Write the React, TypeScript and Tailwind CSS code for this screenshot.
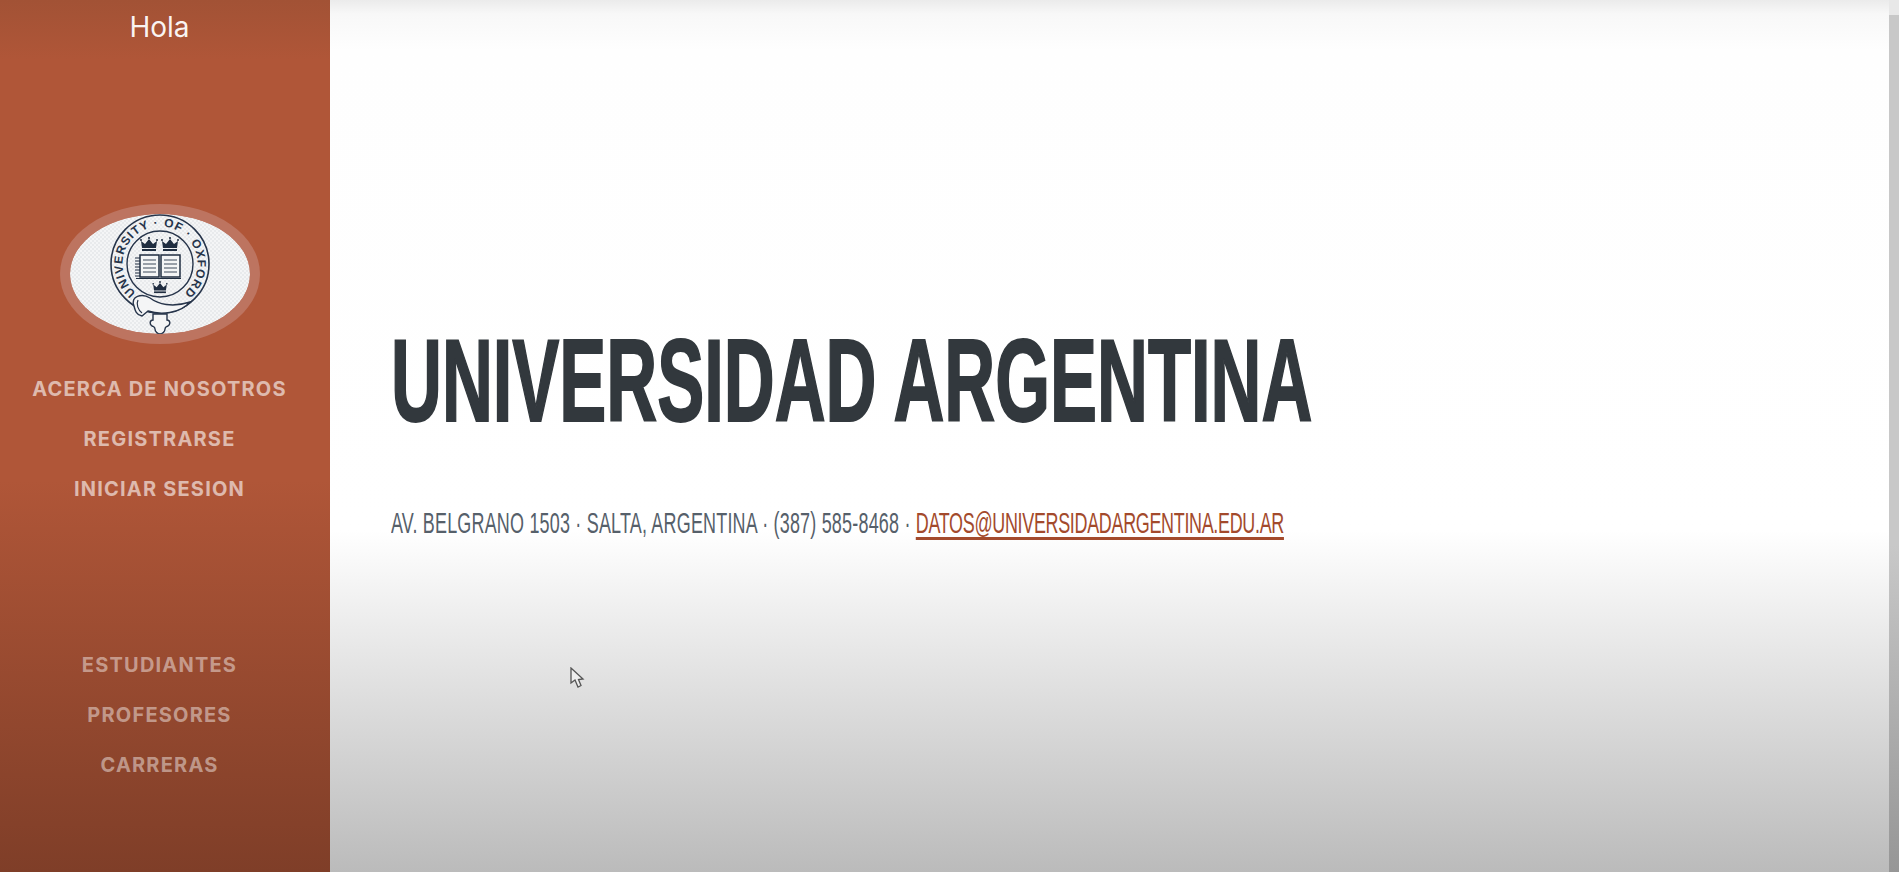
const sealLabel = "UNIVERSITY · OF · OXFORD"

const topLinks = ["ACERCA DE NOSOTROS", "REGISTRARSE", "INICIAR SESION"]
const bottomLinks = ["ESTUDIANTES", "PROFESORES", "CARRERAS"]

function Crown({ x, y, s = 1 }: { x: number; y: number; s?: number }) {
  return (
    <g transform={`translate(${x} ${y}) scale(${s})`} fill="#1f2d40">
      <path d="M-8 -4 L-7 3 L7 3 L8 -4 L4 -1 L0 -6 L-4 -1 Z" />
      <rect x="-7" y="4" width="14" height="2" />
      <circle cx="0" cy="-7" r="1.1" />
      <circle cx="-8" cy="-5" r="1" />
      <circle cx="8" cy="-5" r="1" />
    </g>
  )
}

function Seal() {
  return (
    <svg width="180" height="120" viewBox="0 0 180 120" className="block">
      <defs>
        <pattern id="check" width="4" height="4" patternUnits="userSpaceOnUse">
          <rect width="4" height="4" fill="#f4f5f6" />
          <rect width="2" height="2" fill="#e8eaec" />
          <rect x="2" y="2" width="2" height="2" fill="#e8eaec" />
        </pattern>
        <path id="ring" d="M 65.9 78.7 A 37.5 37.5 0 1 1 114.1 78.7" />
      </defs>
      <ellipse cx="90" cy="60" rx="90" ry="60" fill="url(#check)" />
      <circle cx="90" cy="50" r="49" fill="none" stroke="#26344a" strokeWidth="1.6" />
      <circle cx="90" cy="50" r="33" fill="none" stroke="#26344a" strokeWidth="1.4" />
      <text fontFamily="'Liberation Sans', sans-serif" fontSize="12" fontWeight="700" fill="#26344a">
        <textPath href="#ring" textLength="183" lengthAdjust="spacing">
          {sealLabel}
        </textPath>
      </text>
      <Crown x={79} y={31} />
      <Crown x={100} y={31} />
      <Crown x={90} y={74} s={0.85} />
      <path d="M70 41 H89 V63 H70 Z M91 41 H110 V63 H91 Z" fill="#f4f5f6" stroke="#1f2d40" strokeWidth="1.5" />
      <path d="M73 46 H86 M73 50 H86 M73 54 H86 M73 58 H86 M94 46 H107 M94 50 H107 M94 54 H107 M94 58 H107" stroke="#79838f" strokeWidth="1.6" />
      <path d="M65 44 H70 M65 47 H70 M65 50 H70 M65 53 H70 M65 56 H70 M65 59 H70 M65 62 H70 M66 64.5 H111" stroke="#1f2d40" strokeWidth="1.2" />
      <path d="M64 92 C60 82 72 79 80 84 C88 90 102 94 120 88 C110 100 90 101 78 97 L72 102 C66 101 65 96 64 92 Z" fill="#f4f5f6" stroke="#26344a" strokeWidth="1.4" />
      <path d="M68 86 C66 90 68 96 72 99" fill="none" stroke="#26344a" strokeWidth="1.2" />
      <path d="M83 100 H97 V106 C100 106 101 110 98 112 C96 113 95 113 95 115 C95 118 92 120 90 120 C88 120 85 118 85 115 C85 113 84 113 82 112 C79 110 80 106 83 106 Z" fill="#f4f5f6" stroke="#26344a" strokeWidth="1.4" />
    </svg>
  )
}

function NavGroup({ links, tone }: { links: string[]; tone: string }) {
  return (
    <nav className={`flex flex-col items-center gap-[26px] ${tone}`}>
      {links.map((link) => (
        <a key={link} href="#" className="text-[20px] leading-[24px] font-bold tracking-[1.2px] whitespace-nowrap">
          {link}
        </a>
      ))}
    </nav>
  )
}

export default function App() {
  return (
    <div className="relative flex h-[872px] overflow-hidden bg-[linear-gradient(to_bottom,#ebebeb_0px,#f8f8f8_14px,#fefefe_50px,#ffffff_530px,#bbbbbb_872px)] font-['Liberation_Sans',sans-serif]">
      <aside className="flex w-[330px] shrink-0 flex-col items-center bg-[linear-gradient(to_bottom,#a25235_0px,#b05638_60px,#b05638_480px,#7f3e28_872px)] pr-[11px] font-['Inter',sans-serif]">
        <p className="mt-[11px] h-[193px] text-[28px] leading-[32px] text-white/95">Hola</p>
        <div className="rounded-[50%] bg-[#bd7460] px-[10px] py-[10px]">
          <div className="overflow-hidden rounded-[50%]">
            <Seal />
          </div>
        </div>
        <div className="mt-[33px]">
          <NavGroup links={topLinks} tone="text-white/60" />
        </div>
        <div className="mt-[152px]">
          <NavGroup links={bottomLinks} tone="text-white/45" />
        </div>
      </aside>

      <main className="min-w-0 flex-1 pl-[61px] pt-[329px]">
        <h1 className="origin-left scale-x-[0.6075] whitespace-nowrap text-[116px] leading-[104px] font-bold text-[#32383d] [-webkit-text-stroke:2px_#32383d]">
          UNIVERSIDAD ARGENTINA
        </h1>
        <p className="mt-[72px] origin-left scale-x-[0.599] whitespace-nowrap text-[30px] leading-[36px] tracking-[0.33px] text-[#56606a]">
          AV. BELGRANO 1503 · SALTA, ARGENTINA · (387) 585-8468 ·{" "}
          <a href="#" className="tracking-[-0.55px] text-[#a34a2c] underline underline-offset-4">
            DATOS@UNIVERSIDADARGENTINA.EDU.AR
          </a>
        </p>
      </main>

      {/* scrollbar of the recorded page */}
      <div className="flex w-[10px] shrink-0 flex-col">
        <div className="h-[15px] bg-[#e8e8e8]" />
        <div className="flex-1 bg-[linear-gradient(to_bottom,#c8c8c8_0px,#c8c8c8_530px,#969696_100%)]" />
      </div>

      <svg width="16" height="22" viewBox="0 0 16 22" className="absolute left-[570px] top-[667px]">
        <path d="M1 1 V16 L5 13 L8 20 L11 18.5 L8.5 12.5 L13 12 Z" fill="#eeeeee" stroke="#555555" strokeWidth="1.3" />
      </svg>
    </div>
  )
}
